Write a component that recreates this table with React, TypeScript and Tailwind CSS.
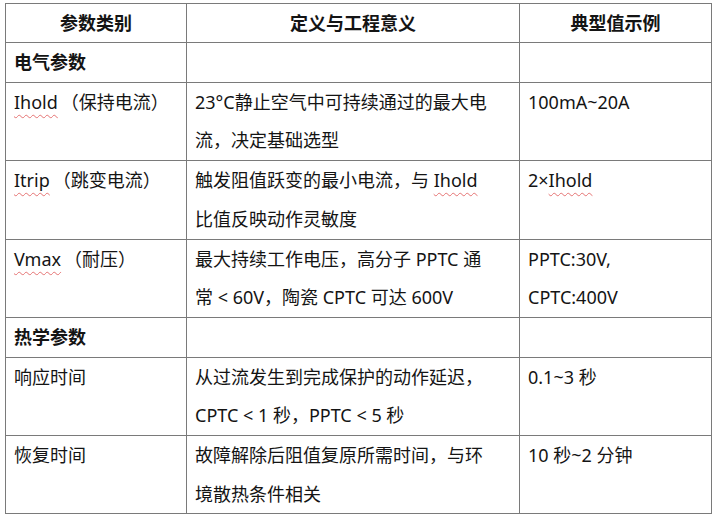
import React from "react";

type Row = {
  name: React.ReactNode;
  desc?: React.ReactNode;
  value?: React.ReactNode;
  group?: boolean;
};

const Squiggle = ({ children }: { children: React.ReactNode }) => (
  <span className="underline decoration-wavy decoration-[#e57373] decoration-1 underline-offset-[5px]">
    {children}
  </span>
);

// Latin term followed by a full-width parenthetical
const Term = ({ en, zh }: { en: string; zh: string }) => (
  <>
    <Squiggle>{en}</Squiggle>
    <span className="ml-[3px]">（{zh}）</span>
  </>
);

const rows: Row[] = [
  { name: "电气参数", group: true },
  {
    name: <Term en="Ihold" zh="保持电流" />,
    desc: (
      <>
        23°C静止空气中可持续通过的最大电
        <br />
        流，决定基础选型
      </>
    ),
    value: "100mA~20A",
  },
  {
    name: <Term en="Itrip" zh="跳变电流" />,
    desc: (
      <>
        触发阻值跃变的最小电流，与 <Squiggle>Ihold</Squiggle>
        <br />
        比值反映动作灵敏度
      </>
    ),
    value: (
      <>
        2×<Squiggle>Ihold</Squiggle>
      </>
    ),
  },
  {
    name: <Term en="Vmax" zh="耐压" />,
    desc: (
      <>
        最大持续工作电压，高分子 PPTC 通
        <br />
        常 &lt; 60V，陶瓷 CPTC 可达 600V
      </>
    ),
    value: (
      <>
        PPTC:30V,
        <br />
        CPTC:400V
      </>
    ),
  },
  { name: "热学参数", group: true },
  {
    name: "响应时间",
    desc: (
      <>
        从过流发生到完成保护的动作延迟，
        <br />
        CPTC &lt; 1 秒，PPTC &lt; 5 秒
      </>
    ),
    value: "0.1~3 秒",
  },
  {
    name: "恢复时间",
    desc: (
      <>
        故障解除后阻值复原所需时间，与环
        <br />
        境散热条件相关
      </>
    ),
    value: "10 秒~2 分钟",
  },
];

const cell = "border border-[#7a7a7a] px-2 align-top";

const App = () => {
  return (
    <div className="h-[517px] w-[713px] bg-white pl-[5px] pt-[3px] font-['Noto_Sans','Noto_Sans_CJK_SC',sans-serif] text-[18px] leading-[38.7px] text-[#141414]">
      <table className="w-[706px] table-fixed border-collapse">
        <colgroup>
          <col className="w-[181px]" />
          <col className="w-[333px]" />
          <col className="w-[192px]" />
        </colgroup>
        <thead>
          <tr>
            <th className={`${cell} text-center font-bold leading-[38px]`}>参数类别</th>
            <th className={`${cell} text-center font-bold leading-[38px]`}>定义与工程意义</th>
            <th className={`${cell} text-center font-bold leading-[38px]`}>典型值示例</th>
          </tr>
        </thead>
        <tbody>
          {rows.map((r, i) => (
            <tr key={i}>
              <td className={`${cell} ${r.group ? "font-bold" : ""} whitespace-nowrap`}>
                {r.name}
              </td>
              <td className={`${cell} whitespace-nowrap`}>{r.desc}</td>
              <td className={`${cell} whitespace-nowrap`}>{r.value}</td>
            </tr>
          ))}
        </tbody>
      </table>
    </div>
  );
};

export default App;
